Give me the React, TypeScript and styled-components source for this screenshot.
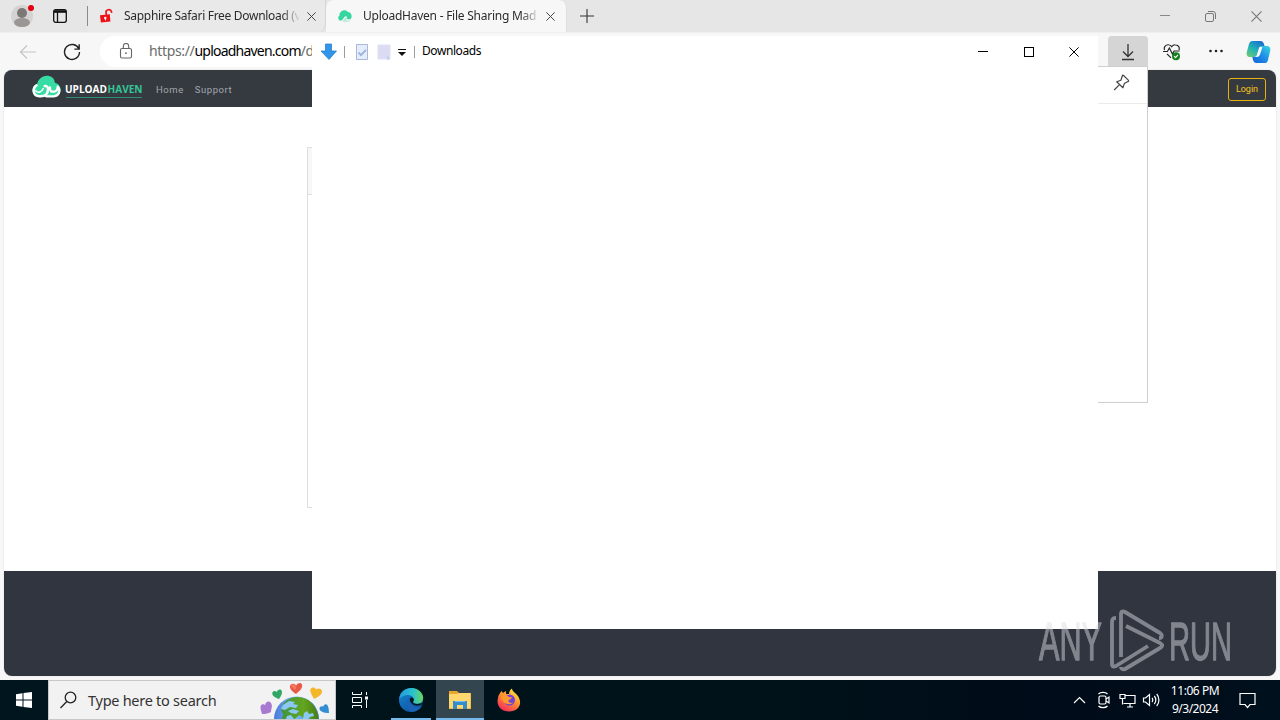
import React from "react";
import styled, { createGlobalStyle } from "styled-components";

const GlobalStyle = createGlobalStyle`
  * {
    box-sizing: border-box;
  }

  body {
    margin: 0;
    overflow: hidden;
    font-family: "Noto Sans", "Open Sans", sans-serif;
    font-size: 12px;
    color: #2b2b2b;
  }

  svg {
    display: block;
    flex: none;
  }
`;

const Desktop = styled.div`
  position: relative;
  width: 1280px;
  height: 720px;
  display: flex;
  flex-direction: column;
  background: #f7f7f7;
  overflow: hidden;
`;

const Text = styled.span<{ $size?: number; $spacing?: number; $color?: string; $width?: number }>`
  font-size: ${p => p.$size || 12}px;
  letter-spacing: ${p => p.$spacing || 0}px;
  color: ${p => p.$color || "inherit"};
  width: ${p => (p.$width ? `${p.$width}px` : "auto")};
  line-height: 1.35;
  white-space: nowrap;
  flex: none;
`;

const TabStrip = styled.div`
  height: 32px;
  flex: none;
  display: flex;
  background: #e6e6e6;
`;

const StripTools = styled.div`
  width: 88px;
  display: flex;
  align-items: center;
  padding-left: 10px;
  gap: 19px;

  &::after {
    content: "";
    width: 1px;
    height: 20px;
    margin-left: 1px;
    background: #8b8b8b;
  }
`;

const Tab = styled.div<{ $active?: boolean }>`
  width: ${p => (p.$active ? 241 : 238)}px;
  display: flex;
  align-items: center;
  padding: 0 ${p => (p.$active ? 11 : 9)}px 0 11px;
  background: ${p => (p.$active ? "#f7f7f7" : "#e9e9e9")};
  border-radius: ${p => (p.$active ? "8px 8px 0 0" : "0 0 8px 0")};
  border-right: 1px solid ${p => (p.$active ? "#dedede" : "#d6d6d6")};

  > span {
    margin-left: 10px;
    margin-right: auto;
    mask-image: linear-gradient(to right, #000 90%, transparent 101%);
  }
`;

const NewTab = styled.div`
  display: flex;
  align-items: center;
  padding-left: 13px;
  flex: 1;
`;

const WindowButtons = styled.div<{ $gap: number; $right: number }>`
  display: flex;
  align-items: center;
  gap: ${p => p.$gap}px;
  margin-left: auto;
  padding-right: ${p => p.$right}px;
`;

const Toolbar = styled.div`
  height: 38px;
  flex: none;
  display: flex;
  align-items: center;
  padding-left: 19px;
  border-top: 1px solid #efefef;
`;

const AddressBar = styled.div`
  width: 812px;
  height: 31px;
  margin-left: 19px;
  padding-left: 19px;
  border-radius: 16px;
  background: #fff;
  display: flex;
  align-items: center;
  gap: 15px;

  b {
    font-weight: 400;
    letter-spacing: -0.78px;
    color: #000;
  }
`;

const BrowserActions = styled.div`
  margin-left: auto;
  padding-right: 9px;
  display: flex;
  align-items: center;
`;

const DownloadButton = styled.div`
  width: 40px;
  height: 31px;
  margin-right: 15px;
  border-radius: 4px 4px 0 0;
  background: #d5d5d5;
  display: flex;
  align-items: center;
  justify-content: center;
`;

const Page = styled.div`
  height: 606px;
  flex: none;
  margin: 0 4px 4px;
  border-radius: 8px;
  overflow: hidden;
  background: #fff;
  box-shadow: 0 0 1px #aaa;
  display: flex;
  flex-direction: column;
`;

const SiteNav = styled.div`
  height: 37px;
  background: #343a40;
  display: flex;
  align-items: center;
  padding: 0 10px 0 28px;
  color: #a4a8ac;
`;

const NavLink = styled.a`
  font-family: "Roboto", sans-serif;
  font-size: 9.5px;
  letter-spacing: 0.55px;
  margin-left: 11px;
  padding-top: 2px;
`;

const LoginButton = styled.button`
  margin: 2px 0 0 auto;
  width: 38px;
  height: 23px;
  padding: 0 0 1px;
  border: 1px solid #e8b20d;
  border-radius: 3px;
  background: none;
  color: #fcc418;
  font: 9px "Roboto", sans-serif;
`;

const SiteBody = styled.div`
  flex: 1;
  padding: 40px 303px 0;
`;

const Card = styled.div`
  height: 361px;
  border: 1px solid #dedede;
`;

const CardHeader = styled.div`
  height: 47px;
  background: #f7f7f7;
  border-bottom: 1px solid #dfdfdf;
`;

const SiteFooter = styled.div`
  height: 105px;
  background: #303540;
`;

const DownloadsFlyout = styled.div`
  position: absolute;
  left: 788px;
  top: 66px;
  width: 360px;
  height: 337px;
  background: #fff;
  border: 1px solid #cfcfcf;
`;

const FlyoutHeader = styled.div`
  height: 37px;
  padding: 0 17px 5px 0;
  display: flex;
  align-items: center;
  justify-content: flex-end;
  border-bottom: 1px solid #ebebeb;
`;

const ExplorerWindow = styled.div`
  position: absolute;
  left: 312px;
  top: 36px;
  width: 786px;
  height: 593px;
  background: #fff;
`;

const ExplorerTitle = styled.div`
  height: 31px;
  padding-left: 8px;
  display: flex;
  align-items: center;
`;

const Divider = styled.i`
  width: 1px;
  height: 12px;
  margin: 0 7px;
  background: #9b9b9b;
`;

const QuickAccess = styled.div`
  display: flex;
  align-items: center;
  gap: 8px;
  padding: 1px 0 0 3px;

  > :last-child {
    margin-left: -8px;
  }

  + ${Divider} {
    margin-left: 0;
  }
`;

const Watermark = styled.svg`
  position: absolute;
  left: 1034px;
  top: 604px;
  opacity: 0.48;
  overflow: visible;
`;

const Taskbar = styled.div`
  height: 40px;
  flex: none;
  display: flex;
  background: linear-gradient(to right, #00151d, #001219 60%, #000b19 85%, #00101c);
`;

const TaskButton = styled.div<{ $width?: number; $active?: boolean; $open?: boolean }>`
  width: ${p => p.$width || 49}px;
  display: flex;
  align-items: center;
  justify-content: center;
  position: relative;
  background: ${p => (p.$active ? "#334650" : "transparent")};

  &::after {
    content: "";
    display: ${p => (p.$open || p.$active ? "block" : "none")};
    position: absolute;
    bottom: 0;
    left: ${p => (p.$active ? 0 : 5)}px;
    right: ${p => (p.$active ? 0 : 5)}px;
    height: 2px;
    background: #76b9ed;
  }
`;

const SearchBox = styled.div`
  width: 288px;
  display: flex;
  align-items: center;
  padding-left: 11px;
  background: #f2f2f2;
  border: 1px solid #c5c7c8;

  > span {
    margin-left: 10px;
    padding-top: 2px;
  }

  > :last-child {
    margin-left: auto;
    align-self: flex-end;
  }
`;

const Tray = styled.div`
  margin-left: auto;
  display: flex;
  align-items: center;
  padding-right: 24px;
`;

const Clock = styled.div`
  width: 52px;
  margin: 0 18px 0 8px;
  display: flex;
  flex-direction: column;
  align-items: center;
  gap: 2px;
  color: #fff;
`;

const Cross = ({ size = 9, color = "#444", width = 1.1 }: any) => (
  <svg width={size} height={size} viewBox="0 0 10 10" stroke={color} strokeWidth={width}>
    <path d="M.4.4l9.2 9.2M9.6.4L.4 9.6" />
  </svg>
);

const Minimize = ({ color = "#000" }: any) => (
  <svg width="10" height="10" stroke={color}><path d="M0 4.5h10" /></svg>
);

const Profile = () => (
  <svg width="24" height="28" viewBox="0 0 24 28">
    <circle cx="12" cy="14" r="11" fill="#d5d3d1" />
    <circle cx="12" cy="11" r="5" fill="#7b7876" />
    <ellipse cx="12" cy="20.5" rx="8" ry="4.5" fill="#9a9693" />
    <circle cx="21" cy="6" r="3" fill="#e3000f" />
  </svg>
);

const TabActions = () => (
  <svg width="14" height="14" fill="none" stroke="#111" strokeWidth="1.3">
    <rect x=".7" y=".7" width="12.6" height="12.6" rx="2" />
    <path d="M1 2.5h12" strokeWidth="2.6" />
    <path d="M4.5 3v10" />
  </svg>
);

const RedLock = () => (
  <svg width="15" height="16" viewBox="0 0 15 16">
    <path d="M1 7.3l9.800-1 .6 7.300-9.500 1z" fill="#f01118" />
    <path d="M7.400 7L7 4.400C6.600 1.300 11.800.700 12.400 3.600l.3 1.300" fill="none" stroke="#f01118" strokeWidth="1.700" />
    <circle cx="6.300" cy="10" r="1.200" fill="#fff" />
    <path d="M6.200 10l.4 2.400" stroke="#fff" />
  </svg>
);

const CloudIcon = () => (
  <svg width="16" height="16" viewBox="0 0 16 16">
    <path d="M3.600 12.700C1 12.300.5 8.600 2.500 7.500 2.200 3 8 .4 11 4c3.700.5 4.800 4.800 2.500 7.300H9.500c1.300-1.400.6-3-.8-3-2 .1-2 3.600-5.100 4.400z" fill="#36d6a0" />
    <path d="M5 12.800c2.400-.2 2.400-3.200 3.800-3.100 1.100.1.800 2-.2 2.900h5.100c-1 1.200-6.700 2.200-8.700.2z" fill="#b4e9d8" />
  </svg>
);

const SiteLogo = () => (
  <svg width="113" height="32" viewBox="0 1 113 32">
    <path d="M6.500 24.500C2 24.200-.2 20.600.5 17.200c.5-2.600 2.300-4.400 4.600-4.800C5.800 6.500 13.500.6 20.600 5.800c1.400 1.300 2 3.100 2.300 4.900 4.300 1.200 6.400 4.900 5.600 8.600-.8 3.500-3.600 5-7 5.100z" fill="#37dca4" />
    <g fill="none" stroke="#fff" strokeLinecap="round" strokeLinejoin="round">
      <path d="M4.500 13.300C.6 15.800.2 23.800 7.500 24.300c6 .4 8.500-2.300 8.500-7.300 0-2-1.300-3.200-3.200-3" strokeWidth="2.500" />
      <path d="M3.600 18.800c2.600 2.600 6.200 1.400 7.600-2.300" strokeWidth="1.500" />
      <path d="M18 15.500c-.3 3.600 1.300 4.600 4 4.100 2.300-.4 3.800-2.400 3.700-5 3 3.500 1.800 9.300-3.900 9.700H14" strokeWidth="2.300" />
    </g>
    <g fontFamily="Open Sans, sans-serif" fontSize="10.400" fontWeight="700">
      <text x="33" y="20.600" fill="#fff" textLength="42" lengthAdjust="spacingAndGlyphs">UPLOAD</text>
      <text x="75.500" y="20.600" fill="#37c497" textLength="35" lengthAdjust="spacingAndGlyphs">HAVEN</text>
    </g>
    <path d="M34 25.500h76" stroke="#2c8e72" />
  </svg>
);

const BackIcon = () => (
  <svg width="17" height="16" fill="none" stroke="#c5c5c5" strokeWidth="1.200"><path d="M17 8H1.500M8 1.500L1.500 8 8 14.500" /></svg>
);

const ReloadIcon = () => (
  <svg width="18" height="18" fill="none" stroke="#222" strokeWidth="1.400">
    <path d="M15.800 5.800A7.500 7.500 0 1 0 16.500 9M16.200 1.300v4.800h-4.800" />
  </svg>
);

const PadlockIcon = () => (
  <svg width="15" height="17" fill="none" stroke="#666" strokeWidth="1.100">
    <rect x="1.500" y="5.500" width="11" height="9.500" rx="1.600" />
    <path d="M4.300 5.500V3.200C4.300-.5 9.700-.5 9.700 3.200V5.500" />
    <circle cx="7" cy="10.200" r=".9" fill="#666" stroke="none" />
  </svg>
);

const HeartIcon = () => (
  <svg width="18" height="18" viewBox="0 0 18 18" fill="none" stroke="#222" strokeWidth="1.150">
    <path d="M1.600 7C.3 4 3 1.300 5.800 1.800 7.300 2 8.200 3 8.700 3.700 9.500 2.500 10.700 1.700 12.300 1.800 15.200 1.800 17 4.400 15.900 7M4 10.800l4 4M0 8.500h4.400l2-3.500 3 6 1.700-3h5.500" />
    <circle cx="13" cy="13.200" r="4" fill="#13801d" stroke="none" />
    <path d="M11.100 13.200l1.400 1.400 2.500-2.800" stroke="#fff" />
  </svg>
);

const CopilotIcon = () => (
  <svg width="25" height="24" viewBox="0 0 25 24">
    <defs>
      <linearGradient id="cpA" x1="0" y1="1" x2=".7" y2="0">
        <stop stopColor="#76ca69" /><stop offset=".48" stopColor="#24b7b2" /><stop offset="1" stopColor="#1a72cf" />
      </linearGradient>
      <linearGradient id="cpB" x1="0" y1="1" x2="1" y2="0">
        <stop stopColor="#1464d6" /><stop offset=".5" stopColor="#1f8ce8" /><stop offset="1" stopColor="#3adadd" />
      </linearGradient>
    </defs>
    <path d="M6.500 1h8c2.100 0 3 1.200 3.600 3.500l.5 1.500h-2.400c-2 0-2.900 1-3.400 3l-1.500 5c-.7 2.300-1.600 3-3.300 3H4.500C1 17 .1 14.700.9 11.700L3 4.100C3.600 1.900 4.600 1 6.500 1z" fill="url(#cpA)" />
    <path d="M18.700 23h-8.200c-2.100 0-3-1.200-3.600-3.500L6.300 17H8c2 0 3-1 3.500-3L13 9c.7-2.300 1.500-3 3.200-3h4.400c3.500 0 4.300 2.300 3.500 5.300l-2.100 8.600c-.5 2.100-1.400 3.100-3.300 3.100z" fill="url(#cpB)" />
    <path d="M13.500 7h2.900l-1.700 5.500c-.9 2.800-1.500 4.500-4.100 4.500H9c1.300-.5 1.800-1.500 2.200-3z" fill="#f4fbff" />
  </svg>
);

const PinIcon = () => (
  <svg width="17" height="17" fill="none" stroke="#444" strokeWidth="1.200" strokeLinejoin="round">
    <path d="M10.300 1.300l5 4.800c.7.7.2 1.200-.4 1.500l-3.600 2-1.400 4.200-6.200-6 4.200-1.500 1.500-4.500c.2-.7.5-.9.9-.5zM6.500 10.600L1.200 16" />
  </svg>
);

const DownArrow = () => (
  <svg width="17" height="18"><path d="M5.500 1h6v7h5l-7.500 8.500L1 8h4.500z" fill="#3295ea" stroke="#187ac9" strokeWidth=".7" /></svg>
);

const SheetIcon = ({ checked }: any) => (
  <svg width="14" height="16">
    <path d={checked ? "M1.500.5h11v15h-11z" : "M1 1h12v14H1z"} fill={checked ? "#e6edfa" : "#dbdcf4"} stroke={checked ? "#a8b9d9" : "#dedff5"} />
    {checked && <path d="M3.500 8.500l2.400 2.700L11 5.800" stroke="#9ab1e0" strokeWidth="1.800" fill="none" />}
    {!checked && <path d="M10 15.500v-4l3 4z" fill="#c3cae8" />}
  </svg>
);

const Globe = () => (
  <svg width="76" height="37" viewBox="-1 0 76 37">
    <defs>
      <linearGradient id="sea"><stop stopColor="#4c79dc" /><stop offset=".5" stopColor="#75bbf2" /><stop offset="1" stopColor="#3e7bd3" /></linearGradient>
      <linearGradient id="land"><stop stopColor="#3e9443" /><stop offset=".6" stopColor="#63a51e" /><stop offset="1" stopColor="#467e16" /></linearGradient>
    </defs>
    <circle cx="36.500" cy="37" r="22.500" fill="url(#sea)" />
    <path d="M23 22c6-7 15-9 23-5 7 3 12 11 12.500 20h-8l-2-3-5 2-4-3-5 4H22l1-5-2-4z" fill="url(#land)" />
    <path d="M23 23l6-4 6 1-2 2 5 1-2 3-6-1-5 3-4-1zM28 29l5-2 6 2-3 3-5-1zM44 31l3-2 2 3 4-1 1 3-4 1-2 2h-5zM27 34l4-1 3 4h-8z" fill="#8bc9f3" />
    <path d="M36 12c-4-2.800-6.500-5-6-8 .5-2.600 4.500-3 6.200-.4C38.500-.2 42.500.7 42.200 4c-.2 3-3.200 5.500-6.200 8z" fill="#e95a46" />
    <path d="M35.500 8c-3-2-5-4-4.500-5.500 2-1.500 4 0 5.200 2z" fill="#f47a5b" />
    <path d="M19 17c-4-1.500-7-3-6.700-6 .1-2.200 3-2.900 4.600-1 .8-2.700 4.300-3.300 5-.8.7 2.500-1.400 5.500-2.900 7.800z" fill="#30a765" />
    <path d="M54 17c-2-4-4.500-7-3.500-9.700C51.500 5 55 5 56 7.500c2-1.700 5.700-1 6 1.500.4 4-4.500 6-8 8z" fill="#f4b72a" />
    <path d="M2 32c-1-4-2.500-7-.7-9 1.100-1.200 3-.7 3.700.3.500-4.300 4.500-5 6-2.300C13 24 11 27 11 30c-3 1.500-5 2-9 2z" fill="#a879d0" />
    <path d="M69 31c-5 0-9-1.500-9.500-4-.4-2.200 2-3.300 3.800-2.300.1-2.500 3-3.500 4.200-1.500 1.300 2 1.300 5 1.500 7.800z" fill="#338dd4" />
  </svg>
);

const EdgeIcon = () => (
  <svg width="26" height="26" viewBox="0 0 26 26">
    <defs>
      <linearGradient id="edA"><stop stopColor="#239bdd" /><stop offset=".55" stopColor="#29bfd1" /><stop offset="1" stopColor="#67d85c" /></linearGradient>
      <linearGradient id="edB" x2=".7" y2="1"><stop stopColor="#1688d4" /><stop offset="1" stopColor="#0d539f" /></linearGradient>
    </defs>
    <circle cx="13" cy="13" r="12" fill="url(#edB)" />
    <path d="M1.200 12C2 4.500 8 .800 14 1c7 .300 12.300 6.200 11 11.500-1 4.500-6.500 5.300-9.600 3.300-1.300-.9.500-1.800.3-4C15.300 7.700 7 5.500 1.200 12z" fill="url(#edA)" />
    <path d="M11.500 10.500c-2 4.500 2 10 8 9.700 1.500 0 2.500-.4 4.200-1.200-2 3.700-6 5.900-10 6C9 23 6.500 15 11.500 10.500z" fill="#1a63b4" />
    <path d="M12 11.500c-1 4.500 4 7.500 8.300 7 1.500-.2 3-.9 3.900-1.500l1.800.7V15c-3 2.500-8.700 2.400-10.500 1-1-1 .3-1.900.3-3.400 0-1.700-2.600-3.300-3.800-1.100z" fill="#00151d" />
  </svg>
);

const FolderIcon = () => (
  <svg width="24" height="20" viewBox="0 0 24 20">
    <path d="M1 1h8l2 2h12v16H1z" fill="#e9a52c" />
    <path d="M1 4h8l2-1h11.500v15.500H1z" fill="#ffd76f" />
    <path d="M5 11h14v8h-4v-4H9v4H5z" fill="#338ccb" />
    <path d="M7 11h10v1H7z" fill="#6ac1ee" />
  </svg>
);

const FirefoxIcon = () => (
  <svg width="24" height="25" viewBox="0 0 24 25">
    <defs><linearGradient id="fx" x1=".8" y1="0" x2=".2" y2="1"><stop stopColor="#fff13e" /><stop offset=".45" stopColor="#ff9130" /><stop offset="1" stopColor="#f52360" /></linearGradient></defs>
    <path d="M3 5l1.500-2L6 5l3-2v3h3c0-3 2-5 3-5.500C15 4 20 5 22 10c3.500 7-1.500 13.500-10 13.500S-1 17 1 10c.3-2 1-3.500 2-5z" fill="url(#fx)" />
    <circle cx="12.500" cy="12" r="5.500" fill="#7143d8" />
    <path d="M4 8c4-2 6-1 8 1l3 .3c-.5 2-3 2-3.500 3.400-.4 2 2.500 3 5 1.500-3 4-12 2-12.500-6.200z" fill="#ff982d" />
  </svg>
);

const App = () => {
  return (
    <Desktop>
      <GlobalStyle />
      <TabStrip>
        <StripTools>
          <Profile />
          <TabActions />
        </StripTools>
        <Tab>
          <RedLock />
          <Text $width={175} $spacing={-0.3}>Sapphire Safari Free Download (v</Text>
          <Cross />
        </Tab>
        <Tab $active>
          <CloudIcon />
          <Text $width={175} $spacing={-0.25}>UploadHaven - File Sharing Mad</Text>
          <Cross />
        </Tab>
        <NewTab>
          <svg width="14" height="14" stroke="#333" strokeWidth="1.100"><path d="M7 0v14M0 7h14" /></svg>
        </NewTab>
        <WindowButtons $gap={35} $right={18}>
          <Minimize color="#888" />
          <svg width="11" height="11" fill="none" stroke="#777"><rect x=".5" y="2.500" width="8" height="8" rx="1.500" /><path d="M3 .5h5a2.500 2.500 0 0 1 2.500 2.500v5" /></svg>
          <Cross size={11} color="#777" width={1} />
        </WindowButtons>
      </TabStrip>

      <Toolbar>
        <BackIcon />
        <svg width="27" height="1" />
        <ReloadIcon />
        <AddressBar>
          <PadlockIcon />
          <Text $size={14} $spacing={-0.35} $color="#6b6b6b">https://<b>uploadhaven.com</b>/d</Text>
        </AddressBar>
        <BrowserActions>
          <DownloadButton>
            <svg width="14" height="18" fill="none" stroke="#333" strokeWidth="1.300"><path d="M7 1v12M2 8.500L7 13.500l5-5M1 16.500h12" /></svg>
          </DownloadButton>
          <HeartIcon />
          <svg width="65" height="16" fill="#222"><circle cx="29.500" cy="7" r="1.300" /><circle cx="35" cy="7" r="1.300" /><circle cx="40.500" cy="7" r="1.300" /></svg>
          <CopilotIcon />
        </BrowserActions>
      </Toolbar>

      <Page>
        <SiteNav>
          <SiteLogo />
          <NavLink>Home</NavLink>
          <NavLink>Support</NavLink>
          <LoginButton>Login</LoginButton>
        </SiteNav>
        <SiteBody>
          <Card><CardHeader /></Card>
        </SiteBody>
        <SiteFooter />
      </Page>

      <Taskbar>
        <TaskButton $width={48}>
          <svg width="16" height="16" fill="#fff"><path d="M0 2.200l6.500-.9v6.200H0zM7.500 1.100L16 0v7.500H7.500zM0 8.500h6.500v6.200L0 13.800zM7.500 8.500H16V16l-8.500-1.100z" /></svg>
        </TaskButton>
        <SearchBox>
          <svg width="18" height="18" fill="none" stroke="#222" strokeWidth="1.300"><circle cx="10.500" cy="6.500" r="5.300" /><path d="M6.800 10.500L.5 17" /></svg>
          <Text $size={14.5} $spacing={-0.27} $color="#333">Type here to search</Text>
          <Globe />
        </SearchBox>
        <TaskButton $width={50}>
          <svg width="19" height="18" viewBox="1 0 19 18" fill="none" stroke="#fff"><path d="M1.500 1v2.500h9V1M1.500 17v-2.500h9V17M1.500 6.500h9v5h-9zM15.500 1v3M15.500 9v8" /><path d="M14 5.500h3v3h-3z" fill="#fff" stroke="none" /></svg>
        </TaskButton>
        <TaskButton $width={50} $open><EdgeIcon /></TaskButton>
        <TaskButton $width={48} $active><FolderIcon /></TaskButton>
        <TaskButton><FirefoxIcon /></TaskButton>
        <Tray>
          <svg width="88" height="20" fill="none" stroke="#fff" strokeWidth="1.200">
            <path d="M1 13l5.500-5.500L12 13" />
            <rect x="26" y="6" width="7" height="8" rx="1.500" />
            <path d="M33 9l3-2v6l-3-2M25.500 4c2-2.200 7-2.200 9 0M25.500 16c2 2.200 7 2.200 9 0" />
            <path d="M52 5.500h10v8H50.500M54 17h6M57 13.500V17M47 4.500h5v4h-5zM49.500 8.500v6" />
            <path d="M70.500 8h2l4-3.500v11L72.500 12h-2zM79 8c1 1 1 3 0 4M81.300 6c2 2.200 2 5.800 0 8M83.700 4c3 3.500 3 8.500 0 12" />
          </svg>
          <Clock>
            <Text $spacing={-0.45}>11:06 PM</Text>
            <Text $spacing={-0.5}>9/3/2024</Text>
          </Clock>
          <svg width="17" height="17" fill="none" stroke="#fff" strokeWidth="1.200"><path d="M1 1.500h15v11h-5l-2.500 3-2.500-3H1z" /></svg>
        </Tray>
      </Taskbar>

      <DownloadsFlyout>
        <FlyoutHeader><PinIcon /></FlyoutHeader>
      </DownloadsFlyout>

      <ExplorerWindow>
        <ExplorerTitle>
          <DownArrow />
          <Divider />
          <QuickAccess>
            <SheetIcon checked />
            <SheetIcon />
            <svg width="23" height="16" fill="#111"><path d="M7 5h8v1H7zM7 8h8l-4 4z" /></svg>
          </QuickAccess>
          <Divider />
          <Text $color="#000" $spacing={-0.42}>Downloads</Text>
          <WindowButtons $gap={35.5} $right={19}>
            <Minimize />
            <svg width="10" height="10" fill="none" stroke="#000" shapeRendering="crispEdges"><path d="M.5.5h9v9h-9z" /></svg>
            <Cross size={10} color="#000" width={1} />
          </WindowButtons>
        </ExplorerTitle>
      </ExplorerWindow>

      <Watermark width="204" height="72" fill="none" stroke="#dcdde1" strokeWidth="3.800" strokeLinejoin="round">
        <g fill="#dcdde1" strokeWidth="1.300" fontFamily="Liberation Sans, sans-serif" fontSize="53">
          <text x="5" y="55.500" textLength="63" lengthAdjust="spacingAndGlyphs">ANY</text>
          <text x="135" y="55.500" textLength="63" lengthAdjust="spacingAndGlyphs">RUN</text>
        </g>
        <path d="M82 14c-4 0-4 2-4 5v41c0 3 2 3 4 2l32-20M87 53V10c0-3 2-3 4-2l35 21c3 2 2 5-1 5M92 22l34 17c3 2 3 3 0 5L91 65c-2 1-4 0-4-2" />
      </Watermark>
    </Desktop>
  );
};

export default App;
